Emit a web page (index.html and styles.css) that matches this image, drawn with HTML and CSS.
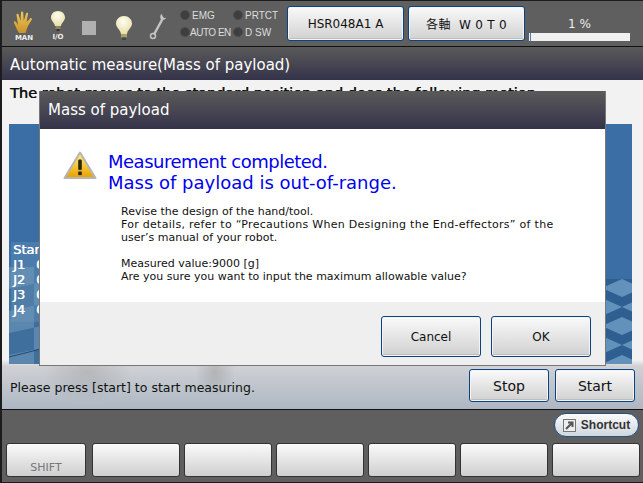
FILE: index.html
```html
<!DOCTYPE html>
<html lang="ja">
<head>
<meta charset="utf-8">
<title>Mass of payload</title>
<link rel="stylesheet" href="styles.css">
</head>
<body>
<div class="screen">
  <header class="topbar">
    <div class="icons">
      <div class="icon-cell hand-cell">
        <svg width="22" height="23" viewBox="0 0 22 23"><defs><linearGradient id="gold" x1="0" y1="0" x2="0" y2="1"><stop offset="0" stop-color="#f3c85a"/><stop offset="1" stop-color="#c8942a"/></linearGradient></defs><path d="M6 22C4 19 3 16 1 12c-.8-1.500 1-2.300 2-1l2 3L3.500 4c-.2-1.500 1.800-1.800 2.200-.3L7.500 10 8 1.500c.1-1.500 2.100-1.500 2.200 0l.6 8.500L13 2.500c.4-1.400 2.300-1 2 .5l-1.500 8 3.500-3.500c1.200-1.100 2.700.3 1.600 1.500L15 15c-1 2-1.500 4.500-2.500 7z" fill="url(#gold)"/></svg>
        <span class="icon-label">MAN</span>
      </div>
      <div class="icon-cell bulb-cell">
        <svg width="14" height="20" viewBox="0 0 14 20"><defs><radialGradient id="glass" cx=".45" cy=".3" r=".7"><stop offset="0" stop-color="#fffdf0"/><stop offset="1" stop-color="#e6dfa8"/></radialGradient></defs><path d="M7 0C3 0 0 2.800 0 6.500c0 3.500 3.500 5 4 8.500h6c.5-3.500 4-5 4-8.500C14 2.800 11 0 7 0z" fill="url(#glass)"/><rect x="4.500" y="15" width="5" height="3" fill="#8a8660"/><rect x="5.500" y="18" width="3" height="2" fill="#333"/></svg>
        <span class="icon-label">I/O</span>
      </div>
      <div class="stop-square"></div>
      <svg class="big-bulb" width="16" height="24" viewBox="0 0 16 24"><path d="M8 0C3.500 0 0 3.200 0 7.500c0 4.500 4.500 6 5 10.500h6c.5-4.500 5-6 5-10.500C16 3.200 12.500 0 8 0z" fill="url(#glass)"/><rect x="5" y="18" width="6" height="3.500" fill="#a8a068"/><rect x="6" y="21.500" width="4" height="2.500" fill="#444"/></svg>
      <svg class="wrench" width="18" height="27" viewBox="0 0 18 27"><path d="M13.500 6 5.500 20.500" stroke="#c4c4c4" stroke-width="2.500" stroke-linecap="round"/><path d="M12.500.8c-1.500 1.700-1.700 4-.6 5.700 1.700 1 4 .3 5.300-1.800l-2.300.2-1.200-1.700z" fill="#c4c4c4"/><circle cx="4" cy="23" r="2.500" fill="none" stroke="#c4c4c4" stroke-width="1.500"/></svg>
    </div>
    <div class="leds">
      <div class="led"><i></i><span>EMG</span></div>
      <div class="led"><i></i><span>PRTCT</span></div>
      <div class="led tight-led"><i></i><span>AUTO EN</span></div>
      <div class="led"><i></i><span>D SW</span></div>
    </div>
    <button class="btn top-btn">HSR048A1 A</button>
    <button class="btn top-btn axis">各軸&nbsp; W 0 T 0</button>
    <div class="progress">
      <span class="pct">1 %</span>
      <div class="track"><div class="fill"></div></div>
    </div>
  </header>
  <div class="title-bar">Automatic measure(Mass of payload)</div>
  <main class="content">
    <p class="intro">The robot moves to the standard position and does the following motion.</p>
    <div class="viewer">
      <svg class="floor" width="623" height="240" viewBox="0 0 623 240" preserveAspectRatio="none">
        <defs>
          <pattern id="chk-left" width="50" height="44" patternUnits="userSpaceOnUse" patternTransform="translate(0 143) skewY(-12)">
            <rect width="50" height="44" fill="#3f6f9d"/>
            <rect width="25" height="22" fill="#5b87ae"/>
            <rect x="25" y="22" width="25" height="22" fill="#5b87ae"/>
          </pattern>
          <pattern id="chk-right" width="40" height="38" patternUnits="userSpaceOnUse" patternTransform="translate(593 155)">
            <rect width="40" height="38" fill="#2f5f90"/>
            <path d="M0 9 20 0 40 9 20 18z" fill="#6291bb"/>
            <path d="M-20 28 0 19 20 28 0 37zM20 28 40 19 60 28 40 37z" fill="#6291bb"/>
          </pattern>
        </defs>
        <rect width="623" height="240" fill="#3a6ea5"/>
        <rect y="143" width="32" height="97" fill="url(#chk-left)"/>
        <path d="M0 233 32 225" stroke="#234a70" stroke-width="1"/>
        <rect x="593" y="155" width="30" height="85" fill="url(#chk-right)"/>
      </svg>
      <div class="readout">
        <div class="r-head">Start</div>
        <div class="axis-val">J1   0</div>
        <div class="axis-val">J2   0</div>
        <div class="axis-val">J3   0</div>
        <div class="axis-val">J4   0</div>
      </div>
    </div>
    <div class="status-row">
      <span class="status-text">Please press [start] to start measuring.</span>
      <div class="status-btns">
        <button class="btn act">Stop</button>
        <button class="btn act">Start</button>
      </div>
    </div>
    <section class="modal">
      <div class="modal-title">Mass of payload</div>
      <div class="modal-body">
        <div class="alert">
          <svg width="34" height="28" viewBox="0 0 34 28"><defs><linearGradient id="warn" x1="0" y1="0" x2="0" y2="1"><stop offset="0" stop-color="#fff27a"/><stop offset="1" stop-color="#e8a000"/></linearGradient></defs><path d="M17 1.500 32.500 27h-31z" fill="url(#warn)" stroke="#b5b5b5" stroke-width="2" stroke-linejoin="round"/><rect x="15.200" y="8.500" width="3.600" height="10.500" rx="1.200" fill="#2a2410"/><rect x="15.200" y="20.500" width="3.600" height="3.600" fill="#2a2410"/></svg>
          <h2><span class="tight">Measurement completed.</span><br>Mass of payload is out-of-range.</h2>
        </div>
        <p class="msg">Revise the design of the hand/tool.<br><span class="wide">For details, refer to “Precautions When Designing the End-effectors” of the</span><br>user’s manual of your robot.<br><br>Measured value:9000 [g]<br>Are you sure you want to input the maximum allowable value?</p>
      </div>
      <div class="modal-foot">
        <button class="btn dlg">Cancel</button>
        <button class="btn dlg">OK</button>
      </div>
    </section>
  </main>
  <footer class="bottom">
    <div class="shortcut-row">
      <button class="shortcut"><svg width="13" height="13" viewBox="0 0 13 13"><rect x=".5" y=".5" width="12" height="12" fill="#eee" stroke="#777"/><path d="M3 10 9 4M5 3.500h4.500V8" stroke="#555" stroke-width="2" fill="none"/></svg>Shortcut</button>
    </div>
    <div class="fkeys">
      <button class="fkey first">SHIFT</button>
      <button class="fkey"></button>
      <button class="fkey"></button>
      <button class="fkey"></button>
      <button class="fkey"></button>
      <button class="fkey"></button>
      <button class="fkey"></button>
    </div>
  </footer>
</div>
</body>
</html>
```
FILE: styles.css
```css
* { box-sizing: border-box; }
html, body { margin: 0; padding: 0; }
body { width: 643px; height: 483px; overflow: hidden; background: #5f5f5f; font-family: "DejaVu Sans", "Noto Sans CJK JP", sans-serif; }
.screen { width: 643px; height: 483px; display: flex; flex-direction: column; border: 1px solid #1c1c1c; border-left-width: 2px; border-right: 0; overflow: hidden; position: relative; }
button { font-family: inherit; padding: 0; margin: 0; }

.topbar { height: 46px; flex: none; display: flex; align-items: center; background: #5f5f5f; border-bottom: 1px solid #111; }
.icons { display: flex; align-items: center; width: 178px; flex: none; height: 100%; }
.icon-cell { display: flex; flex-direction: column; align-items: center; padding-top: 5px; }
.hand-cell { width: 24px; margin-left: 10px; }
.bulb-cell { width: 18px; margin-left: 13px; }
.icon-label { font-size: 7px; line-height: 8px; color: #eee; font-weight: 700; }
.bulb-cell svg { margin-bottom: 2px; }
.stop-square { width: 14px; height: 14px; background: #b0b0b0; margin: 9px 0 0 15px; }
.big-bulb { margin: 8px 0 0 20px; }
.wrench { margin: 5px 0 0 17px; }
.leds { width: 107px; flex: none; display: grid; grid-template-columns: 53px 1fr; row-gap: 6px; }
.led { display: flex; align-items: center; height: 11px; color: #ddd; font-size: 10px; font-family: "Liberation Sans", sans-serif; white-space: nowrap; }
.led i { width: 10px; height: 10px; border-radius: 50%; background: #3e3e3e; border: 1px solid #4c4c4c; margin-right: 2px; flex: none; }
.tight-led i { margin-right: 0; }
.tight-led span { letter-spacing: -.5px; }

.btn { color: #111; background: linear-gradient(#fafafa, #d0d0d0); border: 1px solid #0a4480; border-radius: 3px; box-shadow: inset 0 0 0 1px #f4f4f4, inset 0 -2px 0 #bdbdbd; }
.top-btn { width: 117px; height: 35px; font-size: 12px; margin-right: 4px; flex: none; }
.axis { letter-spacing: .3px; }
.progress { width: 101px; flex: none; display: flex; flex-direction: column; align-items: center; padding-top: 10px; }
.pct { font-size: 12px; line-height: 14px; color: #eee; margin-bottom: 2px; }
.track { width: 101px; height: 8px; background: #f0f0f0; }
.fill { width: 1px; height: 100%; background: #3b80c8; margin-left: 1px; }

.title-bar { height: 33px; flex: none; padding: 2px 0 0 8px; display: flex; align-items: center; color: #fff; font-size: 15px; background: linear-gradient(#5a5a5a, #35334a); }

.content { height: 330px; flex: none; position: relative; background: radial-gradient(ellipse 45px 30px at 85px 292px, rgba(120,120,120,.25), transparent), radial-gradient(ellipse 20px 25px at 213px 292px, rgba(120,120,120,.3), transparent), linear-gradient(#f2f2f2 0, #f2f2f2 85%, #cfd1d4 87%, #adb7c3 100%); border-bottom: 1px solid #111; display: flex; flex-direction: column; padding: 0 0 0 7px; }
.intro { margin: 5px 0 0 1px; height: 39px; font-size: 14.5px; line-height: 16px; color: #111; white-space: nowrap; text-shadow: .4px 0 0 #111; }
.viewer { width: 623px; height: 240px; position: relative; overflow: hidden; flex: none; }
.floor { display: block; }
.readout { position: absolute; left: 2px; top: 118px; width: 60px; height: 80px; color: #fff; font-size: 13px; line-height: 15px; padding-left: 2px; text-shadow: .4px 0 0 #fff; background: rgba(120,160,195,.3); }
.axis-val { white-space: pre; word-spacing: -.5px; }

.status-row { display: flex; align-items: center; justify-content: space-between; padding: 5px 8px 0 1px; flex: none; }
.status-text { font-size: 12.5px; color: #111; margin-top: 3px; }
.status-btns { display: flex; gap: 6px; }
.act { width: 80px; height: 33px; font-size: 14px; }

.modal { position: absolute; left: 37px; top: 11px; width: 567px; height: 275px; border: 1px solid #777; border-top: 0; display: flex; flex-direction: column; background: #efefef; }
.modal-title { height: 38px; flex: none; padding-left: 8px; display: flex; align-items: center; color: #fff; font-size: 15px; background: linear-gradient(#5a5a5a, #35334a); }
.modal-body { height: 173px; flex: none; background: #fff; padding: 22px 0 0 23px; }
.alert { display: flex; align-items: flex-start; gap: 11px; }
.alert svg { flex: none; }
.alert h2 { margin: 0; font-size: 18px; line-height: 21px; font-weight: 400; color: #0000ee; }
.tight { letter-spacing: -.5px; }
.msg { margin: 12px 0 0 58px; font-size: 11px; line-height: 13px; color: #111; white-space: nowrap; }
.wide { letter-spacing: .28px; }
.modal-foot { flex: 1; display: flex; justify-content: flex-end; align-items: flex-start; gap: 10px; padding: 14px 14px 0 0; }
.dlg { width: 100px; height: 41px; font-size: 12px; }

.bottom { flex: 1; display: flex; flex-direction: column; background: #5f5f5f; }
.shortcut-row { height: 32px; flex: none; display: flex; justify-content: flex-end; padding: 3px 4px 0 0; }
.shortcut { width: 85px; height: 24px; border-radius: 12px; border: 1px solid #1f5288; background: linear-gradient(#fbfbfb, #cfd6de); font-family: "Liberation Sans", sans-serif; font-size: 12px; font-weight: 700; color: #333; display: flex; align-items: center; justify-content: center; gap: 5px; }
.fkeys { display: flex; gap: 4px; padding: 1px 0 0 4px; }
.fkey { width: 88px; height: 34px; background: linear-gradient(#fafafa, #cfcfcf); border: 1px solid #333; border-radius: 3px; font-size: 11px; color: #777; display: flex; align-items: flex-end; justify-content: center; padding-bottom: 2px; }
.fkey.first { width: 80px; margin-right: 2px; }
```
